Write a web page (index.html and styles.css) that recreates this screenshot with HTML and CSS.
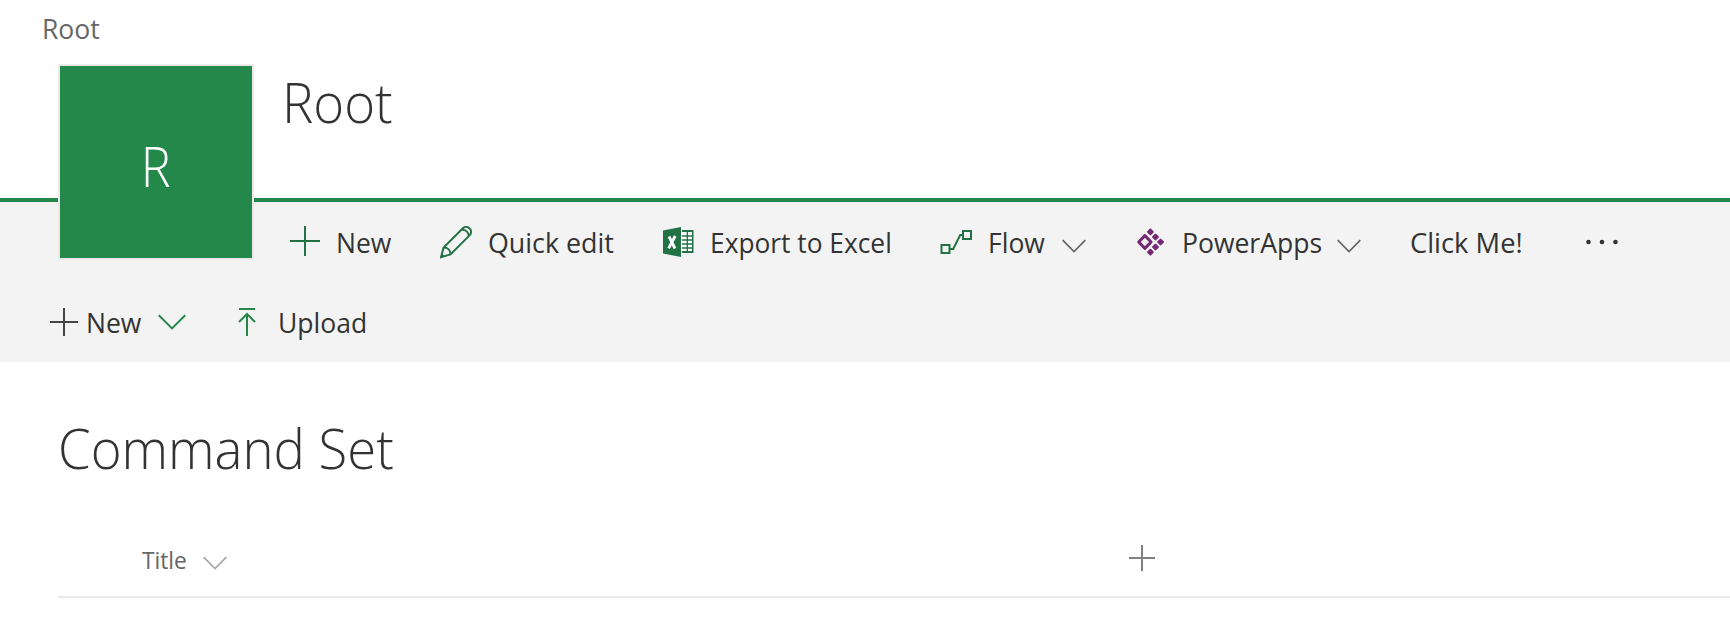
FILE: index.html
```html
<!DOCTYPE html>
<html lang="en">
<head>
<meta charset="utf-8">
<title>Root - Command Set</title>
<link rel="stylesheet" href="styles.css">
</head>
<body>
<header class="site-header">
  <nav class="breadcrumb"><span class="crumb">Root</span></nav>
  <h1 class="site-title"><span class="heading-text">Root</span></h1>
  <div class="site-logo"><span class="logo-letter">R</span></div>
</header>
<section class="commands">
  <div class="command-bar">
    <div class="command">
      <svg class="icon" width="34" height="34" viewBox="0 0 34 34"><path class="line-dark" d="M0 15h30M15 0v30"/></svg>
      <span class="label new">New</span>
    </div>
    <div class="command">
      <svg class="icon" width="34" height="34" viewBox="0 0 34 34"><path class="line-dark" d="M1 31.2L3.6 21.5L22.9 2.2C24.6.5 27.5.5 29.4 2.3C31.6 4.2 31.7 7.2 29.8 9.1L10.5 28.4ZM3.6 21.5C7.8 21.5 10.5 24.4 10.5 28.4M21.8 3.4C25.7 3.6 28.6 6.4 28.8 10.2"/><path class="fill-dark" d="M.5 31.8l1.2-4.5 3.3 3.2z"/></svg>
      <span class="label quick">Quick edit</span>
    </div>
    <div class="command">
      <svg class="icon" width="34" height="34" viewBox="0 0 34 34"><path class="excel-sheet" d="M19 4h12.5v23H19z"/><path class="excel" d="M1 4.5L19 1v30L1 27.5z"/><path class="excel" d="M20 4h11.5v23H20v-2h10V6H20z"/><path class="excel-grid" d="M20 10h11M20 14h11M20 18h11M20 22h11M25.3 5v21"/><path class="excel-x" d="M7 10.5l6 12M13.2 10L6.6 22.3"/></svg>
      <span class="label export">Export to Excel</span>
    </div>
    <div class="command">
      <svg class="icon" width="34" height="34" viewBox="0 0 34 34"><path class="line-dark" d="M1.5 19h8v8h-8zM23 5h8v8h-8zM10 23h3.2L20.2 9H23"/></svg>
      <span class="label flow">Flow</span>
      <svg class="chevron lowered" width="24" height="14" viewBox="0 0 24 14"><path d="M.7 1.2L12 12.5L23.3 1.2"/></svg>
    </div>
    <div class="command">
      <svg class="icon" width="34" height="34" viewBox="0 0 34 34"><g class="powerapps"><path class="powerapps-ring" d="M8.9 9.6l6.2 6.4-6.2 6.4L2.7 16z"/><path d="M14.4 3.5l2.4 2.4-2.4 2.4-2.4-2.4zM19.5 8.6l2.4 2.4-2.4 2.4-2.4-2.4zM24.6 13.6L27 16l-2.4 2.4-2.4-2.4zM19.5 18.6l2.4 2.4-2.4 2.4-2.4-2.4zM14.4 23.7l2.4 2.4-2.4 2.4-2.4-2.4z"/></g></svg>
      <span class="label power">PowerApps</span>
      <svg class="chevron lowered" width="24" height="14" viewBox="0 0 24 14"><path d="M.7 1.2L12 12.5L23.3 1.2"/></svg>
    </div>
    <div class="command"><span class="label click">Click Me!</span></div>
    <div class="command">
      <svg class="icon" width="34" height="34" viewBox="0 0 34 34"><g class="dots"><circle cx="3.5" cy="16" r="2.3"/><circle cx="17" cy="16" r="2.3"/><circle cx="30.5" cy="16" r="2.3"/></g></svg>
    </div>
  </div>
  <div class="list-bar">
    <div class="command">
      <svg class="plus" width="28" height="28" viewBox="0 0 28 28"><path d="M0 14h28M14 0v28"/></svg>
      <span class="label new-item">New</span>
      <svg class="chevron green" width="28" height="16" viewBox="0 0 28 16"><path d="M.8 1.2L14 14.4L27.2 1.2"/></svg>
    </div>
    <div class="command">
      <svg class="upload-icon" width="18" height="28" viewBox="0 0 18 28"><path d="M1 1h16M9 28V6M1 14l8-8 8 8"/></svg>
      <span class="label upload">Upload</span>
    </div>
  </div>
</section>
<main class="list">
  <h2 class="list-title"><span class="heading-text">Command Set</span></h2>
  <div class="list-head">
    <div class="column"><span class="column-name">Title</span><svg class="chevron light" width="24" height="14" viewBox="0 0 24 14"><path d="M.7 1.2L12 12.5L23.3 1.2"/></svg></div>
    <svg class="add-column" width="26" height="26" viewBox="0 0 26 26"><path d="M0 13h26M13 0v26"/></svg>
  </div>
</main>
</body>
</html>
```
FILE: styles.css
```css
* { box-sizing: border-box; }
body {
  margin: 0;
  background: #fff;
  color: #333;
  font-family: "Open Sans", "Noto Sans", sans-serif;
  font-size: 28px;
  line-height: 40px;
}
h1, h2 { margin: 0; font-size: 56px; font-weight: 300; line-height: 72px; }
svg { display: block; flex: none; fill: none; stroke-width: 2; }
.crumb, .label, .heading-text, .column-name {
  display: block;
  transform: scaleX(.947);
  transform-origin: left;
}
.site-header { position: relative; height: 202px; border-bottom: 4px solid #24884b; }
.breadcrumb { height: 64px; padding: 8px 0 0 42px; color: #666; }
.crumb { width: 70px; }
.site-title { padding: 1px 0 0 282px; }
.site-title .heading-text { width: 140px; transform: scaleX(.94); }
.site-logo {
  position: absolute;
  top: 64px;
  left: 58px;
  width: 196px;
  height: 196px;
  display: flex;
  align-items: center;
  justify-content: center;
  border: 2px solid #eaeaea;
  background: #24884b;
  color: #fff;
  font-size: 56px;
  font-weight: 300;
}
.logo-letter { padding-top: 5px; transform: scaleX(.9); }
.commands { height: 160px; background: #f3f3f3; }
.command-bar {
  height: 80px;
  padding-left: 290px;
  display: grid;
  grid-template-columns: 150px 222px 278px 196px 273px 176px 1fr;
}
.command { display: flex; align-items: center; white-space: nowrap; }
.command .icon { margin: 2px 11px 0 0; }
.label { flex: none; }
.new { margin-left: 1px; }
.quick { margin-left: 3px; transform: scaleX(.958); }
.export { margin-left: 3px; transform: scaleX(.94); }
.flow { width: 74px; margin-left: 3px; }
.power { width: 155px; margin-left: 1px; }
.click { margin-left: 1px; transform: scaleX(.976); }
.line-dark { stroke: #217346; }
.fill-dark { fill: #217346; }
.excel { fill: #217346; }
.excel-sheet { fill: #fff; }
.excel-grid { stroke: #217346; stroke-width: 1.3; }
.excel-x { stroke: #fff; stroke-width: 2.8; }
.powerapps { fill: #742774; stroke: #742774; stroke-width: 2; stroke-linejoin: round; }
.powerapps-ring { fill: none; stroke-width: 3; }
.dots { fill: #333; }
.chevron { stroke: #666; stroke-width: 1.7; }
.lowered { margin-top: 8px; }
.green { stroke: #24884b; stroke-width: 2; }
.light { margin-top: 7px; stroke: #a6a6a6; }
.plus { stroke: #444; }
.upload-icon { stroke: #24884b; }
.list-bar {
  height: 80px;
  padding-left: 50px;
  display: grid;
  grid-template-columns: 188px 1fr;
}
.new-item { width: 72px; margin-left: 8px; }
.upload { margin-left: 22px; }
.list { padding-left: 58px; }
.list-title { height: 156px; padding-top: 49px; }
.list-title .heading-text { width: 400px; transform: scaleX(.94); }
.list-head {
  height: 80px;
  display: flex;
  align-items: center;
  border-bottom: 2px solid #eaeaea;
}
.column { width: 1071px; padding: 5px 0 0 84px; display: flex; align-items: center; }
.column-name { width: 61px; color: #666; font-size: 24px; }
.add-column { margin-top: 2px; stroke: #808080; }
```
